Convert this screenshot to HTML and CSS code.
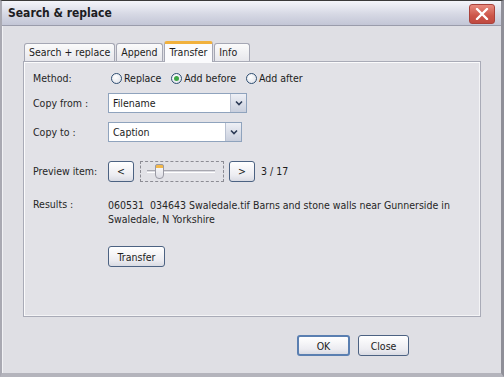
FILE: index.html
```html
<!DOCTYPE html>
<html lang="en">
<head>
    <meta charset="UTF-8">
    <title>Search &amp; replace</title>
    <link rel="stylesheet" href="styles.css">
</head>
<body>
    <div class="window">
        <!-- Title bar -->
        <div class="titlebar">
            <span class="title">Search &amp; replace</span>
            <span class="close">
                <svg width="14" height="12" viewBox="0 0 14 12"><path d="M2 1 L12 11 M12 1 L2 11" stroke="#fff" stroke-width="2.4" stroke-linecap="round"/></svg>
            </span>
        </div>

        <div class="client">
            <!-- Tabs -->
            <div class="tabs">
                <div class="tab">Search + replace</div>
                <div class="tab">Append</div>
                <div class="tab active">Transfer</div>
                <div class="tab info">Info</div>
            </div>

            <div class="panel">
                <div class="row method">
                    <span class="label">Method:</span>
                    <div class="radios">
                        <label class="radio"><span class="dot"></span>Replace</label>
                        <label class="radio on"><span class="dot"></span>Add before</label>
                        <label class="radio"><span class="dot"></span>Add after</label>
                    </div>
                </div>

                <div class="row copy-from">
                    <span class="label">Copy from :</span>
                    <div class="select wide">
                        <span>Filename</span>
                        <span class="arrow"><svg width="8" height="6" viewBox="0 0 8 6"><path d="M1 1.5 L4 4.5 L7 1.5" fill="none" stroke="#2b3a55" stroke-width="1.6"/></svg></span>
                    </div>
                </div>

                <div class="row copy-to">
                    <span class="label">Copy to :</span>
                    <div class="select">
                        <span>Caption</span>
                        <span class="arrow"><svg width="8" height="6" viewBox="0 0 8 6"><path d="M1 1.5 L4 4.5 L7 1.5" fill="none" stroke="#2b3a55" stroke-width="1.6"/></svg></span>
                    </div>
                </div>

                <div class="row preview">
                    <span class="label">Preview item:</span>
                    <div class="stepper">
                        <button class="btn small">&lt;</button>
                        <div class="slider">
                            <span class="track"></span>
                            <span class="thumb"></span>
                        </div>
                        <button class="btn small">&gt;</button>
                        <span class="count">3 / 17</span>
                    </div>
                </div>

                <div class="row results">
                    <span class="label">Results :</span>
                    <p class="result-text">060531&nbsp; 034643 Swaledale.tif Barns and stone walls near Gunnerside in Swaledale, N Yorkshire</p>
                </div>

                <div class="row action">
                    <span class="label"></span>
                    <button class="btn">Transfer</button>
                </div>
            </div>

            <div class="footer">
                <button class="btn default">OK</button>
                <button class="btn">Close</button>
            </div>
        </div>
    </div>
</body>
</html>
```

FILE: styles.css
```css
* {
    margin: 0;
    padding: 0;
    box-sizing: border-box;
}

body {
    width: 504px;
    height: 377px;
    overflow: hidden;
    background: #dfdfe4;
    font-family: 'DejaVu Sans Condensed', 'DejaVu Sans', sans-serif;
    font-size: 10.5px;
    color: #1c1c1c;
}

.window {
    width: 504px;
    height: 377px;
    display: flex;
    flex-direction: column;
    border-top: 1px solid #3a3a3a;
    border-left: 2px solid #a9a9b2;
    border-right: 3px solid #8f8f98;
    border-bottom: 4px solid #b4b4bc;
    background: #dfdfe4;
}

/* Title bar */
.titlebar {
    height: 25px;
    display: flex;
    align-items: center;
    justify-content: space-between;
    padding: 0 6px 0 6px;
    background: linear-gradient(to bottom, #f4f5fa, #d6d8e4 55%, #c3c6d6);
    border-bottom: 1px solid #9a9cab;
}

.title {
    font-weight: bold;
    font-size: 12px;
    color: #1c1c22;
}

.close {
    width: 26px;
    height: 20px;
    margin-top: 2px;
    border-radius: 3px;
    border: 1px solid #a9423b;
    background: linear-gradient(to bottom, #e88c80, #cc5548 60%, #c04a40);
    display: flex;
    align-items: center;
    justify-content: center;
}

.client {
    flex: 1;
    display: flex;
    flex-direction: column;
    padding: 16px 20px 0 20px;
    border-left: 1px solid #f2f2f5;
}

/* Tabs */
.tabs {
    display: flex;
    align-items: flex-end;
    height: 19px;
    padding-left: 1px;
}

.tab {
    height: 18px;
    padding: 0 4px;
    line-height: 17px;
    font-size: 10.5px;
    border: 1px solid #a5a7b4;
    border-bottom: none;
    margin-right: 1px;
    border-radius: 3px 3px 0 0;
    background: linear-gradient(to bottom, #fbfbfb, #e7e7ec);
    color: #1c1c1c;
}

.tab.info {
    width: 36px;
}

.tab.active {
    height: 21px;
    margin-bottom: -1px;
    position: relative;
    z-index: 1;
    padding: 0 5px;
    border-top: 3px solid #f1b13d;
    line-height: 16px;
    background: #fbfbfd;
}

.panel {
    height: 256px;
    border: 1px solid #a9abb7;
    box-shadow: inset 1px 1px 0 #fbfbfc, inset -1px -1px 0 #f4f4f6;
    background: #e2e2e7;
    padding: 7px 0 0 9px;
}

/* Rows */
.row {
    display: flex;
    align-items: center;
}

.label {
    width: 75px;
    flex-shrink: 0;
    color: #262626;
}

.method {
    height: 18px;
}

.copy-from {
    margin-top: 6px;
    height: 20px;
}

.copy-to {
    margin-top: 9px;
    height: 20px;
}

.preview {
    margin-top: 18px;
    height: 22px;
}

.results {
    margin-top: 16px;
    align-items: flex-start;
}

.action {
    margin-top: 20px;
}

/* Radios */
.radios {
    display: flex;
    gap: 10px;
    margin-left: 3px;
}

.radio {
    display: flex;
    align-items: center;
    gap: 2px;
}

.dot {
    width: 11px;
    height: 11px;
    border-radius: 50%;
    border: 1px solid #2f4f72;
    background: radial-gradient(circle at 40% 35%, #fff, #dadde6);
    display: flex;
    align-items: center;
    justify-content: center;
}

.radio.on .dot::after {
    content: "";
    width: 5px;
    height: 5px;
    border-radius: 50%;
    background: #3ea646;
}

/* Selects */
.select {
    width: 134px;
    height: 20px;
    display: flex;
    align-items: center;
    justify-content: space-between;
    padding-left: 4px;
    background: #fff;
    border: 1px solid #8fa3bd;
}

.select.wide {
    width: 139px;
}

.arrow {
    width: 16px;
    height: 18px;
    display: flex;
    align-items: center;
    justify-content: center;
    background: linear-gradient(to bottom, #eef0f6, #c9cfdd);
    border-left: 1px solid #b9c1d1;
}

/* Preview stepper */
.stepper {
    display: flex;
    align-items: center;
}

.btn {
    font-family: inherit;
    font-size: 10.5px;
    color: #1c1c1c;
    height: 21px;
    padding: 0 8px;
    border: 1px solid #4c6282;
    border-radius: 3px;
    background: linear-gradient(to bottom, #ffffff, #ececf1 70%, #d9dbe3);
}

.btn.small {
    width: 26px;
    padding: 0;
}

.slider {
    position: relative;
    width: 84px;
    height: 21px;
    margin: 0 5px 0 6px;
    border: 1px dashed #8c8c94;
}

.track {
    position: absolute;
    left: 6px;
    right: 8px;
    top: 8px;
    height: 3px;
    border-top: 1px solid #a8a8b0;
    border-bottom: 1px solid #fff;
    background: #dcdce2;
}

.thumb {
    position: absolute;
    left: 14px;
    top: 2px;
    width: 9px;
    height: 15px;
    background: linear-gradient(to bottom, #f3b84a 0, #f3b84a 3px, #f6f6f8 3px, #dcdce4);
    border: 1px solid #9a9aa4;
    border-radius: 2px 2px 4px 4px;
}

.count {
    margin-left: 6px;
}

.result-text {
    width: 360px;
    line-height: 14px;
    color: #262626;
}

.action .btn {
    width: 57px;
    padding: 0;
}

/* Dialog buttons */
.footer {
    display: flex;
    justify-content: flex-end;
    gap: 8px;
    padding: 18px 72px 0 0;
}

.footer .btn {
    height: 21px;
    width: 51px;
}

.footer .btn.default {
    width: 53px;
    border: 2px solid #5a7fb1;
}
```
